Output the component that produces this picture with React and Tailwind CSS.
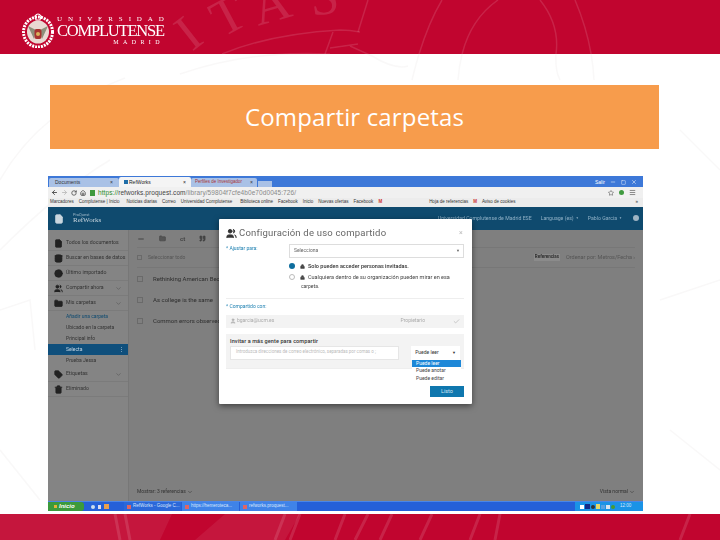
import { ChevronDown, Check, FileText, Database, Clock, Users, Folder, Tag, Trash2, User, Lock, Star, RotateCw, Home, ArrowLeft, ArrowRight, Minus, X, Square, Menu, Quote } from 'lucide-react';

const sidebarItems = [
  { label: 'Todos los documentos', Icon: FileText },
  { label: 'Buscar en bases de datos', Icon: Database },
  { label: 'Último importado', Icon: Clock },
  { label: 'Compartir ahora', Icon: Users, chevron: true },
  { label: 'Mis carpetas', Icon: Folder, chevron: true },
];

const folders = ['Añadir una carpeta', 'Ubicado en la carpeta', 'Principal info'];

// sello de fondo: mismas coordenadas de página, cada franja recorta con su viewBox
function Seal({ top, height, tone, opacity, width = 1.5, letters = false }) {
  return (
    <svg
      className="absolute left-0 top-0 pointer-events-none"
      width="720"
      height={height}
      viewBox={`0 ${top} 720 ${height}`}
      fill="none"
      stroke={tone}
      strokeOpacity={opacity}
      strokeWidth={width}
    >
      {letters && (
        <g fill={tone} fillOpacity={opacity} stroke="none" fontFamily="'Liberation Serif', serif" fontSize="52">
          <text transform="translate(192 52) rotate(-38)">I</text>
          <text transform="translate(222 38) rotate(-28)">T</text>
          <text transform="translate(258 26) rotate(-16)">A</text>
          <text transform="translate(312 16) rotate(-8)">S</text>
        </g>
      )}
      <path d="M222 54 Q270 34 340 30 Q350 30 360 32" />
      <path d="M180 74 Q250 50 330 54 M0 180 Q40 110 125 78 M0 250 Q60 190 110 160" />
      <path d="M368 0 L358 32 M325 54 L333 32 M330 48 L358 44 M350 46 L372 56 Q395 70 408 66" />
      <path d="M412 80 Q424 30 442 0 M458 80 Q462 25 498 0 M540 0 Q560 25 556 54 Q555 70 560 80 M575 0 Q592 40 594 80" />
      <path d="M0 310 L30 300 L35 350 M0 450 L40 500 M680 130 L720 170 M660 300 L720 280 M670 430 L720 470" />
      <polygon points="0,514 172,514 160,540 0,540" fill={tone} fillOpacity={opacity * 0.6} stroke="none" />
      <polygon points="225,514 300,514 285,540 195,540" fill={tone} fillOpacity={opacity * 0.6} stroke="none" />
      <path d="M115 514 L120 540 M125 514 L130 540 M285 514 L275 540 M300 514 L290 540 M345 514 L335 540 M368 514 L355 540 M392 514 L380 540 M432 514 L420 540 M480 514 L470 540 M500 514 L495 540 M690 514 L680 540" strokeWidth="3" />
    </svg>
  );
}

function Crest() {
  return (
    <svg width="32" height="36" viewBox="0 0 32 36" className="shrink-0">
      <ellipse cx="16" cy="20" rx="14.5" ry="15" fill="none" stroke="#fff" strokeWidth="3" strokeDasharray="2 1" />
      <ellipse cx="16" cy="20" rx="11" ry="11.5" fill="#e9d9d2" />
      <path d="M6 14 L14 18 L12 27 Z M26 14 L18 18 L20 27 Z" fill="#8d8f7a" />
      <rect x="12.5" y="17" width="7" height="10" rx="2" fill="#a8322f" />
      <circle cx="16" cy="22" r="2" fill="#d9b25a" />
      <path d="M13 4 Q16 0 19 4 L18 8 L14 8 Z" fill="none" stroke="#fff" strokeWidth="1.2" />
    </svg>
  );
}

function BrowserChrome() {
  return (
    <>
      <div className="h-[11px] bg-[#3d78d8] flex items-end pl-[1px] text-[5px] leading-none font-['Liberation_Sans',sans-serif]">
        <div className="w-[70px] h-[9px] bg-[#a9c1e6] rounded-t-[2px] flex items-center justify-between px-[6px] text-[#333]">
          <span>Documents</span><span>×</span>
        </div>
        <div className="w-[72px] h-[10px] bg-[#f4f4f4] rounded-t-[2px] flex items-center justify-between px-[5px] text-[#222]">
          <span className="flex items-center gap-[1px]"><span className="w-[4px] h-[4px] bg-[#1f6da8]" />RefWorks</span><span>×</span>
        </div>
        <div className="w-[66px] h-[9px] bg-[#a9c1e6] rounded-t-[2px] flex items-center justify-between px-[4px] text-[#333]">
          <span className="text-[#a33] text-[4.5px] whitespace-nowrap">Perfiles de Investigador</span><span>×</span>
        </div>
        <div className="w-[14px] h-[6px] ml-[1px] bg-[#a9c1e6]" />
        <div className="ml-auto flex items-center h-[10px] gap-[5px] pr-[6px] text-white">
          <span>Salir</span>
          <Minus size={6} />
          <Square size={5} />
          <X size={6} />
        </div>
      </div>
      <div className="h-[11px] bg-[#f0f0f0] flex items-center px-[3px] gap-[3px] text-[6.5px] font-['Liberation_Sans',sans-serif] text-[#444]">
        <ArrowLeft size={7} strokeWidth={3} />
        <ArrowRight size={7} className="text-[#bbb]" strokeWidth={3} />
        <RotateCw size={6} strokeWidth={3} />
        <Home size={6} strokeWidth={3} />
        <span className="w-[5px] h-[6px] bg-[#3f9a3f] ml-[1px]" />
        <span className="tracking-[0.08px] whitespace-nowrap">
          <span className="text-[#2a8a2a]">https://</span>refworks.proquest.com<span className="text-[#888]">/library/59804f7cfe4b0e70d0045:726/</span>
        </span>
        <div className="ml-auto flex items-center gap-[5px] pr-[4px]">
          <Star size={6} />
          <span className="w-[5px] h-[5px] bg-[#3f9a3f] rounded-full" />
          <Menu size={7} />
        </div>
      </div>
      <div className="h-[9px] bg-[#ececec] flex items-center px-[2px] gap-[5px] text-[4.5px] whitespace-nowrap font-['Liberation_Sans',sans-serif] text-[#333]">
        <span>Marcadores</span>
        <span>Complutense | Inicio</span>
        <span className="ml-[2px]">Noticias diarias</span>
        <span>Correo</span>
        <span>Universidad Complutense</span>
        <span className="ml-[3px]">Biblioteca online</span>
        <span>Facebook</span>
        <span>Inicio</span>
        <span>Nuevas ofertas</span>
        <span>Facebook</span>
        <span className="text-[#c33] font-bold">M</span>
        <span className="ml-[42px]">Hoja de referencias</span>
        <span className="text-[#c33] font-bold">M</span>
        <span>Aviso de cookies</span>
        <span className="ml-auto pr-[3px]">»</span>
      </div>
    </>
  );
}

function AppHeader() {
  return (
    <div className="h-[23px] bg-[#0f4a6e] flex items-center pl-[6px] pr-[4px] text-[#8fb0c6] font-['Roboto',sans-serif]">
      <FileText size={10} className="text-[#c9d6df]" fill="#c9d6df" />
      <div className="ml-[9px] leading-none">
        <div className="text-[4px] text-[#9fb8c8]">ProQuest</div>
        <div className="text-[7px] font-['Liberation_Serif',serif] text-[#c9d6df]">RefWorks</div>
      </div>
      <div className="ml-auto flex items-center gap-[9px] text-[5.2px] whitespace-nowrap">
        <span>Universidad Complutense de Madrid ESE</span>
        <span className="flex items-center gap-[2px]">Language (es) <span className="text-[3px]">▼</span></span>
        <span className="flex items-center gap-[2px]">Pablo Garcia <span className="text-[3px]">▼</span></span>
        <span className="w-[6px] h-[6px] rounded-full bg-[#9fb4c3] ml-[2px]" />
      </div>
    </div>
  );
}

function Sidebar() {
  return (
    <aside className="w-[81px] bg-[#848484] border-r border-[#777] pt-[6px] text-[5.2px] text-[#333] font-['Roboto',sans-serif] whitespace-nowrap shrink-0">
      {sidebarItems.map(({ label, Icon, chevron }) => (
        <div key={label} className="h-[15px] flex items-center pl-[6px] pr-[2px] gap-[3px] border-b border-[#7b7b7b]">
          <Icon size={9} className="text-[#222] shrink-0" fill="#222" />
          <span>{label}</span>
          {chevron && <ChevronDown size={7} className="ml-auto mr-[4px] text-[#555] shrink-0" />}
        </div>
      ))}
      <div className="text-[5px]">
        <div className="h-[11px] flex items-center pl-[18px] text-[#0e4a70]">{folders[0]}</div>
        {folders.slice(1).map((f) => (
          <div key={f} className="h-[11px] flex items-center pl-[18px]">{f}</div>
        ))}
        <div className="h-[11px] bg-[#0f4f7c] flex items-center justify-between pl-[18px] pr-[4px] text-[#c6d6e2]">
          <span>Selecta</span><span>⋮</span>
        </div>
        <div className="h-[12px] flex items-center pl-[18px]">Prueba Jessa</div>
      </div>
      <div className="h-[15px] flex items-center pl-[6px] pr-[6px] gap-[3px] border-b border-[#7b7b7b]">
        <Tag size={9} className="text-[#222] shrink-0" fill="#222" />
        <span>Etiquetas</span>
        <ChevronDown size={7} className="ml-auto text-[#555]" />
      </div>
      <div className="h-[15px] flex items-center pl-[6px] gap-[3px] border-b border-[#7b7b7b]">
        <Trash2 size={9} className="text-[#222] shrink-0" fill="#222" />
        <span>Eliminado</span>
      </div>
    </aside>
  );
}

function MainList() {
  const rows = ['Rethinking American Becoming', 'As college is the same', 'Common errors observed'];
  return (
    <main className="flex-1 flex flex-col bg-[#7f7f7f] pl-[8px] pr-[8px] text-[6px] text-[#2e2e2e] font-['Roboto',sans-serif] whitespace-nowrap">
      <div className="h-[18px] flex items-center gap-[14px] text-[#444] border-b border-[#777]">
        <Minus size={8} strokeWidth={3} />
        <Folder size={7} fill="#555" />
        <span className="text-[6px] font-bold">ct</span>
        <Quote size={7} fill="#444" />
      </div>
      <div className="h-[20px] flex items-center gap-[6px] border-b border-[#777]">
        <span className="w-[5px] h-[5px] border border-[#6a6a6a]" />
        <span className="text-[5px] text-[#555]">Seleccionar todo</span>
        <span className="ml-auto text-[4.5px] font-bold bg-[#8b8b8b] px-[1px]">Referencias</span>
        <span className="text-[5.5px] text-[#555]">Ordenar por: Metros/Fecha ›</span>
      </div>
      {rows.map((r) => (
        <div key={r} className="h-[21px] flex items-center gap-[10px]">
          <span className="w-[6px] h-[6px] border border-[#6a6a6a]" />
          <span>{r}</span>
        </div>
      ))}
      <div className="mt-auto h-[18px] flex items-center justify-between text-[5px] text-[#333]">
        <span className="flex items-center gap-[1px]">Mostrar: 3 referencias <ChevronDown size={6} /></span>
        <span className="flex items-center gap-[1px]">Vista normal <ChevronDown size={6} /></span>
      </div>
    </main>
  );
}

function Taskbar() {
  const tasks = [
    { label: 'RefWorks - Google C...', cls: 'bg-[#2b68d9]' },
    { label: 'https://hemeroteca...', cls: 'bg-[#3f83e8]' },
    { label: 'refworks.proquest...', cls: 'bg-[#3f83e8]' },
  ];
  return (
    <div className="h-[10px] bg-[#2560d8] border-t border-[#4a86e8] flex items-stretch text-[4.5px] text-[#d9e6fb] whitespace-nowrap font-['Liberation_Sans',sans-serif]">
      <div className="w-[36px] bg-[#3c9a3c] rounded-r-[3px] flex items-center pl-[6px] gap-[2px] text-[6px] font-bold italic text-white">
        <span className="w-[3px] h-[3px] bg-[#e5b33c]" />Inicio
      </div>
      <div className="flex items-center gap-[3px] pl-[7px] w-[40px]">
        <span className="w-[4px] h-[4px] bg-[#cde] rounded-full" />
        <span className="w-[3px] h-[4px] bg-[#dde]" />
        <span className="w-[5px] h-[5px] bg-[#e8a050]" />
      </div>
      {tasks.map((t) => (
        <div key={t.label} className={`w-[57px] ${t.cls} flex items-center gap-[2px] pl-[3px] mr-[1px]`}>
          <span className="w-[4px] h-[4px] bg-[#d66] shrink-0" />
          <span>{t.label}</span>
        </div>
      ))}
      <div className="ml-auto w-[68px] bg-[#1a93e6] flex items-center gap-[1px] pl-[5px]">
        <span className="w-[4px] h-[4px] bg-white" />
        <span className="w-[5px] h-[5px] bg-[#112a8a]" />
        <span className="w-[4px] h-[4px] bg-[#333] rounded-full" />
        <span className="w-[4px] h-[5px] bg-[#e5d86a]" />
        <span className="w-[4px] h-[4px] bg-[#5aa0e0]" />
        <span className="w-[4px] h-[4px] bg-[#d8e4f0]" />
        <span className="w-[4px] h-[4px] bg-[#4a9a30] rounded-full" />
        <span className="ml-[4px]">12:00</span>
      </div>
    </div>
  );
}

function ShareModal() {
  return (
    <div className="absolute left-[171px] top-[43px] w-[253px] h-[185px] bg-white rounded-[1px] shadow-[0_2px_6px_rgba(0,0,0,0.5)] pl-[7px] pr-[8px] pt-[7px] font-['Roboto',sans-serif] text-[#444] text-[5.5px] whitespace-nowrap">
      <div className="h-[15px] flex items-center text-[9.5px] tracking-[0.2px] text-[#666]">
        <Users size={11} className="mr-[2px] text-[#333]" fill="#333" />
        Configuración de uso compartido
        <span className="ml-auto text-[7px] text-[#bbb] pr-[1px]">×</span>
      </div>
      <div className="flex mt-[3px]">
        <span className="w-[63px] text-[#1b7fb0] text-[5px] pt-[1px]">* Ajustar para:</span>
        <div className="flex-1">
          <div className="h-[14px] border border-[#ddd] flex items-center justify-between pl-[4px] pr-[3px] text-[5px] text-[#666]">
            <span>Selecciona</span><span className="text-[4px]">▼</span>
          </div>
          <div className="flex items-center gap-[3px] mt-[3px] h-[10px] font-medium text-[5.5px] text-[#333]">
            <span className="w-[6px] h-[6px] rounded-full bg-[#0f6e9e] mr-[2px]" />
            <Lock size={5} fill="#444" />
            Solo pueden acceder personas invitadas.
          </div>
          <div className="flex items-center gap-[3px] mt-[1px] h-[10px] text-[5.5px] text-[#444]">
            <span className="w-[6px] h-[6px] rounded-full border border-[#bbb] mr-[2px]" />
            <Lock size={5} fill="#444" />
            Cualquiera dentro de su organización pueden mirar en esa
          </div>
          <div className="pl-[12px] h-[9px] text-[5px] flex items-center">carpeta.</div>
        </div>
      </div>
      <div className="border-t border-[#eee] mt-[7px] pt-[4px] text-[#1b7fb0] text-[5px]">* Compartido con:</div>
      <div className="mt-[4px] h-[13px] bg-[#f3f3f3] flex items-center px-[4px] text-[5px] text-[#aaa]">
        <User size={6} fill="#bbb" className="mr-[1px]" />
        bgarcia@ucm.es
        <span className="ml-auto mr-[28px]">Propietario</span>
        <Check size={7} />
      </div>
      <div className="relative mt-[6px] h-[35px] bg-[#f3f3f3] border-b border-[#eee] px-[4px] pt-[3px]">
        <div className="text-[5.5px] text-[#333] font-medium tracking-[0.1px]">Invitar a más gente para compartir</div>
        <div className="flex mt-[1px]">
          <div className="w-[170px] h-[14px] bg-white border border-[#e6e6e6] flex items-center pl-[5px] text-[4.5px] text-[#bbb] overflow-hidden">
            Introduzca direcciones de correo electrónico, separadas por comas o ;
          </div>
          <div className="ml-[12px] w-[49px] h-[14px] bg-white flex items-center justify-between px-[4px] text-[5px] text-[#333]">
            <span>Puede leer</span><span className="text-[4px]">▼</span>
          </div>
        </div>
        <div className="absolute left-[186px] top-[26px] w-[49px] bg-white text-[5px] leading-[7.5px] text-[#444]">
          <div className="bg-[#1e88d8] text-white pl-[4px]">Puede leer</div>
          <div className="pl-[4px]">Puede anotar</div>
          <div className="pl-[4px]">Puede editar</div>
        </div>
      </div>
      <div className="flex justify-end mt-[17px]">
        <span className="w-[34px] h-[11px] bg-[#0f77ae] text-[#cfe6f3] text-[5.5px] flex items-center justify-center">Listo</span>
      </div>
    </div>
  );
}

export default function App() {
  return (
    <div className="w-[720px] h-[540px] flex flex-col bg-white overflow-hidden">
      <header className="relative h-[54px] bg-[#c1052f] overflow-hidden flex items-center pl-[22px] pt-[6px] shrink-0">
        <Seal top={0} height={54} tone="#ffffff" opacity={0.12} letters />
        <Crest />
        <div className="relative ml-[3px] mt-[2px] w-[107px] text-white font-['Liberation_Serif',serif] blur-[0.3px]">
          <div className="text-[7px] leading-[8px] tracking-[5.9px] whitespace-nowrap">UNIVERSIDAD</div>
          <div className="text-[16.5px] leading-[15px] tracking-[-1.2px] whitespace-nowrap">COMPLUTENSE</div>
          <div className="text-[6px] leading-[9px] tracking-[4.4px] text-right">MADRID</div>
        </div>
      </header>

      <section className="relative flex-1 flex flex-col overflow-hidden">
        <Seal top={54} height={460} tone="#7a6060" opacity={0.045} />
        <div className="relative mt-[31px] ml-[50px] w-[609px] h-[64px] bg-[#f79c4c] flex items-center justify-center">
          <h1 className="text-[24px] tracking-[0.15px] text-white font-['Open_Sans',sans-serif]">Compartir carpetas</h1>
        </div>
        <div className="relative mt-[27px] ml-[48px] w-[595px] h-[335px] flex flex-col blur-[0.35px]">
          <BrowserChrome />
          <AppHeader />
          <div className="flex-1 flex min-h-0">
            <Sidebar />
            <MainList />
          </div>
          <Taskbar />
          <ShareModal />
        </div>
      </section>

      <footer className="relative h-[26px] bg-[#c1052f] overflow-hidden shrink-0">
        <Seal top={514} height={26} tone="#ffffff" opacity={0.12} />
      </footer>
    </div>
  );
}
